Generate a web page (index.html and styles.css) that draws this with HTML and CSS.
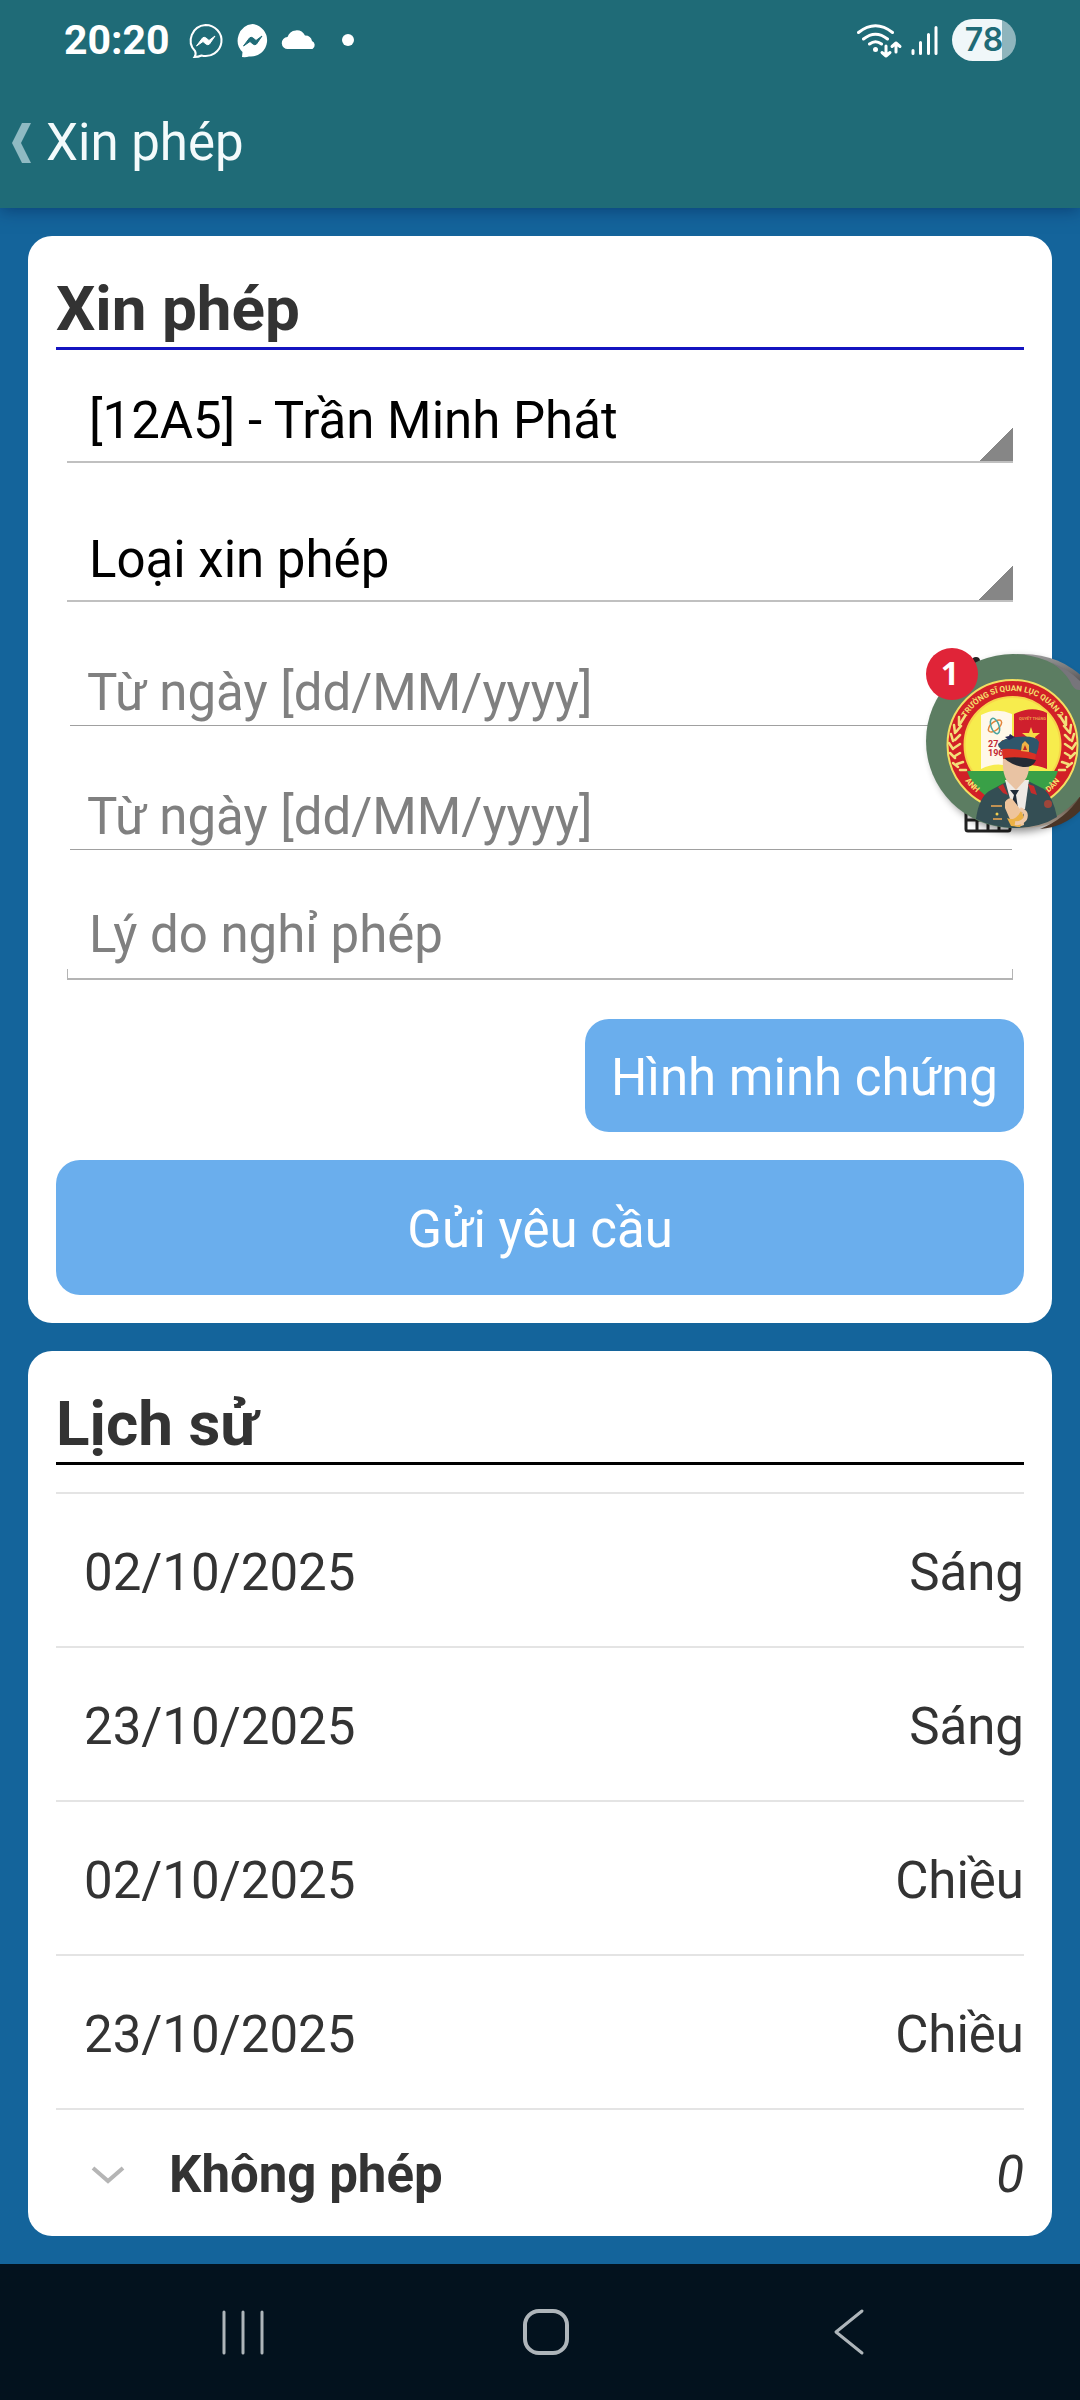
FILE: index.html
```html
<!DOCTYPE html>
<html lang="vi">
<head>
<meta charset="utf-8">
<meta name="viewport" content="width=device-width, initial-scale=1">
<title>Xin phép</title>
<link rel="stylesheet" href="styles.css">
</head>
<body>
<div class="screen">
  <header class="top">
    <div class="status">
      <span class="clock">20:20</span>
      <svg class="notes" width="168" height="40" viewBox="186 20 168 40" aria-hidden="true">
        <path d="M205.500 25a16 15.500 0 1 1-4 30.500q-3 1.500-7 1.500q2-3 .5-6A16 15.500 0 0 1 205.500 25z" fill="none" stroke="#fff" stroke-width="2"/>
        <path d="M196.500 46l6-8q1.500-1.500 3.500 0l3 2.500 6-4.500-5.500 8q-1.500 1.500-3.500 0l-3-2.500z" fill="#fff" stroke="#fff" stroke-width="1" stroke-linejoin="round"/>
        <path d="M252.500 24a16 16 0 1 1-3.500 32.500q-3 1-7 .5l.5-5A16.500 16.500 0 0 1 252.500 24z" fill="#fff"/>
        <path d="M243.500 46l6-8q1.500-1.500 3.500 0l3 2.500 6-4.500-5.500 8q-1.500 1.500-3.500 0l-3-2.500z" fill="#1f6b77" stroke="#1f6b77" stroke-linejoin="round"/>
        <path d="M288 49a6 6 0 0 1-.5-12A9.500 9.500 0 0 1 305 35.500a7 7 0 0 1 7 5.500a4.500 4.500 0 0 1 .5 8z" fill="#fff"/>
        <circle cx="348" cy="40" r="6" fill="#fff"/>
      </svg>
      <svg class="signal" width="86" height="40" viewBox="855 20 86 40" aria-hidden="true">
        <g fill="none" stroke="#fff" stroke-width="3" stroke-linecap="round" stroke-linejoin="round">
          <path d="M858.500 32.500Q875.500 19 892.500 32.500M863.500 39Q875.500 29.500 887.500 39M869.500 44Q875.500 39.500 881.500 44"/>
          <path d="M886 46v10M882 52.500l4 3.500 4-3.500M896 52V43M892 46.500l4-3.500 4 3.500"/>
          <path d="M913 50.500v3M920.500 42.500v11M928.500 34.500v19M936 27.500v26"/>
        </g>
        <circle cx="875.500" cy="49.500" r="2.500" fill="#fff"/>
      </svg>
      <span class="battery">78</span>
    </div>
    <div class="appbar">
      <a class="back" href="#" aria-label="Xin phép">
        <svg width="20" height="40" viewBox="0 0 20 40"><path d="M10 0h9L9 20l10 20h-9L0 20z" fill="#8fbac3"/></svg>
      </a>
      <span>Xin phép</span>
    </div>
  </header>

  <main class="content">
    <section class="card">
      <h1 class="title title-form">Xin phép</h1>
      <form class="form">
        <select class="picker" aria-label="[12A5] - Trần Minh Phát"><option>[12A5] - Trần Minh Phát</option></select>
        <select class="picker picker-type" aria-label="Loại xin phép"><option>Loại xin phép</option></select>
        <div class="date">
          <input type="text" aria-label="Từ ngày" placeholder="Từ ngày [dd/MM/yyyy]">
          <svg class="cal" width="48" height="52" viewBox="0 0 48 52" aria-hidden="true"><g fill="none" stroke="#222" stroke-width="3"><rect x="2" y="6" width="44" height="44" rx="2"/><path d="M2 17h44M2 28h44M2 39h44M13 17v33M24 17v33M35 17v33"/><path d="M12 4v5M36 4v5" stroke-width="8" stroke-linecap="round"/></g></svg>
        </div>
        <div class="date">
          <input type="text" aria-label="Từ ngày" placeholder="Từ ngày [dd/MM/yyyy]">
          <svg class="cal" width="48" height="52" viewBox="0 0 48 52" aria-hidden="true"><g fill="none" stroke="#222" stroke-width="3"><rect x="2" y="6" width="44" height="44" rx="2"/><path d="M2 17h44M2 28h44M2 39h44M13 17v33M24 17v33M35 17v33"/><path d="M12 4v5M36 4v5" stroke-width="8" stroke-linecap="round"/></g></svg>
        </div>
        <textarea class="reason" rows="1" aria-label="Lý do nghỉ phép" placeholder="Lý do nghỉ phép"></textarea>
        <button class="btn btn-proof" type="button">Hình minh chứng</button>
        <button class="btn btn-send" type="button">Gửi yêu cầu</button>
      </form>
    </section>

    <section class="card">
      <h2 class="title">Lịch sử</h2>
      <table class="history">
        <tbody>
          <tr><td>02/10/2025</td><td>Sáng</td></tr>
          <tr><td>23/10/2025</td><td>Sáng</td></tr>
          <tr><td>02/10/2025</td><td>Chiều</td></tr>
          <tr><td>23/10/2025</td><td>Chiều</td></tr>
        </tbody>
      </table>
      <button class="group" type="button">
        <svg width="34" height="18" viewBox="0 0 34 18" aria-hidden="true"><path d="M2 2l15 13L32 2" fill="none" stroke="#b5b5b5" stroke-width="4"/></svg>
        <strong>Không phép</strong>
        <em>0</em>
      </button>
    </section>
  </main>

  <nav class="nav">
    <a href="#"><svg width="48" height="48" viewBox="0 0 48 48"><path d="M5 4v41M24 4v41M43 4v41" stroke="#aeb5ba" stroke-width="3" stroke-linecap="round"/></svg></a>
    <a href="#"><svg width="48" height="48" viewBox="0 0 48 48"><rect x="3" y="3" width="42" height="42" rx="14" fill="none" stroke="#aeb5ba" stroke-width="4"/></svg></a>
    <a href="#"><svg width="48" height="48" viewBox="0 0 48 48"><path d="M37 3L11 24l26 21" fill="none" stroke="#aeb5ba" stroke-width="3" stroke-linecap="round" stroke-linejoin="round"/></svg></a>
  </nav>

  <svg class="chat" width="160" height="200" viewBox="920 640 160 200" aria-hidden="true">
    <defs>
      <path id="arc-top" d="M958.500 745a54 54 0 0 1 108 0"/>
      <path id="arc-bottom" d="M953 745a59.500 59.500 0 0 0 119 0"/>
      <linearGradient id="photo" x1="0" y1="0" x2="0" y2="1"><stop offset="0" stop-color="#9b9b9b"/><stop offset=".15" stop-color="#5d5b5d"/><stop offset=".8" stop-color="#4d3a2d"/><stop offset="1" stop-color="#a99c8f"/></linearGradient>
      <filter id="soft" x="-20%" y="-20%" width="140%" height="140%"><feGaussianBlur stdDeviation="4"/></filter>
    </defs>
    <circle cx="1018" cy="745" r="87" fill="#000" opacity=".45" filter="url(#soft)"/>
    <circle cx="1024" cy="741" r="87" fill="url(#photo)"/>
    <circle cx="1013" cy="741" r="87" fill="#5c7d62"/>
    <path d="M1052 663q16 6 28 18v9q-6 1-10-9-7-11-18-18z" fill="#77757b"/>
    <path d="M1080 797v14q-16 16-40 18q25-10 40-32z" fill="#4a3527"/>
    <circle cx="1012.500" cy="745" r="65" fill="#d22027" stroke="#f2df62" stroke-width="2"/>
    <circle cx="1012.500" cy="745" r="48" fill="#f7ec4d" stroke="#f7d54a" stroke-width="2"/>
    <path d="M967 771h91a48 48 0 0 1-91 0z" fill="#39a047"/>
    <path d="M981 715q15-8 31-1v53q-16-6-31 2z" fill="#fff8e9"/>
    <path d="M1014 714q18-9 33-1v56q-16-7-33-2z" fill="#cf1f2d"/>
    <g fill="none" stroke-width="1.500"><ellipse cx="995" cy="726" rx="4" ry="8" transform="rotate(50 995 726)" stroke="#e3863d"/><ellipse cx="995" cy="726" rx="4" ry="8" transform="rotate(-20 995 726)" stroke="#4aa5a0"/></g>
    <path d="M1031 727l2 6h7l-5 4 2 7-6-4-6 4 2-7-5-4h7z" fill="#f7dc45"/>
    <text class="book" x="988" y="747">27.8</text>
    <text class="book" x="988" y="756">1961</text>
    <text class="book-gold" x="1019" y="720">QUYẾT THẮNG</text>
    <text class="ring"><textPath href="#arc-top" startOffset="50%" text-anchor="middle">TRƯỜNG SĨ QUAN LỤC QUÂN 2</textPath></text>
    <text class="ring"><textPath href="#arc-bottom" startOffset="25%" text-anchor="middle">ANH</textPath></text>
    <text class="ring"><textPath href="#arc-bottom" startOffset="75%" text-anchor="middle">DÂN</textPath></text>
    <g fill="none" stroke="#f3df79" stroke-width="2.500" stroke-linecap="round">
      <path d="M965 716l-5 8M959 717v8M961 726l-5 6M954 725l1 8M960 735l-5 5M951 734l2 7M960 744l-6 4M949 743l4 6M960 753l-5 3M950 753l5 5M963 762l-6 2M953 763l5 4M966 770l-6 0"/>
      <path d="M1060 716l5 8M1066 717v8M1064 726l5 6M1071 725l-1 8M1065 735l5 5M1074 734l-2 7M1065 744l6 4M1076 743l-4 6M1065 753l5 3M1075 753l-5 5M1062 762l6 2M1072 763l-5 4M1059 770l6 0"/>
    </g>
    <path d="M976 819q3-23 15-29l15-8h24l14 7q9 8 13 28q-17 11-43 11-22-1-38-9z" fill="#344e54"/>
    <path d="M1005 780l8 30 12-1 4-29z" fill="#eee9e4"/>
    <path d="M1010 790l4 5-4 14 4 6 4-7-2-13 3-5z" fill="#202c39"/>
    <path d="M998 787l5-3 5 11-5-2zM1028 784l6 2 3 9-6-2z" fill="#c42c2c"/>
    <path d="M1003 759h26q1 15-4 21l-9 10-9-9q-5-8-4-22z" fill="#e9c3a3"/>
    <path d="M998 744q5-6 18-7 20-2 23 5 0 6-3 13l-34-5q-4-3-4-6z" fill="#2f566b"/>
    <path d="M1002 749q18-1 34 5l-1 7q-16-4-32-2z" fill="#d93024"/>
    <path d="M1004 758q16-2 32 2-3 8-13 7-12-2-19-9z" fill="#262b35"/>
    <path d="M1021 751l1-7 3-3 4 4v7z" fill="#efb245"/>
    <path d="M1023 750l2-5 2 5z" fill="#b52a22"/>
    <path d="M1005 737l4-1 1-2 3 2 2 1-6 3z" fill="#222b56"/>
    <path d="M1005 802q5-7 9-1l9 12 1 12q-8 4-12-1l-7-16z" fill="#eec49c"/>
    <path d="M1007 818q8 4 14-7l3 6-4 10-9-1z" fill="#ecb145"/>
    <path d="M1020 809q8 3 5 10-4 5-10 4" fill="none" stroke="#efc9a9" stroke-width="4"/>
    <path d="M991 806h11M993 819h9" stroke="#c19152" stroke-width="2"/>
    <circle cx="997" cy="814" r="1.500" fill="#f0cd50"/>
    <circle cx="1048" cy="804" r="4" fill="#9e463a"/>
    <circle cx="952" cy="674" r="26" fill="#e02438"/>
    <text class="count" x="950" y="685">1</text>
  </svg>
</div>
</body>
</html>
```
FILE: styles.css
```css
* { box-sizing: border-box; }

body {
  margin: 0;
  background: #14649b;
  color: #333;
  font: 51px/60px Roboto, "Noto Sans", sans-serif;
}

.screen {
  position: relative;
  display: flex;
  flex-direction: column;
  min-height: 100vh;
  overflow: hidden;
}

input, select, textarea, button {
  font: inherit;
  margin: 0;
  padding: 0;
  border: 0;
  border-radius: 0;
  background: none;
}

svg { display: block; flex: none; }

/* Header */
.top {
  position: relative;
  background: #1f6b77;
  color: #f3fafb;
  box-shadow: 0 2px 16px rgba(0, 30, 80, .5);
}

.status {
  display: flex;
  align-items: center;
  height: 80px;
  padding: 0 64px;
}

.clock {
  color: #fff;
  font-size: 41px;
  font-weight: 700;
}

.notes { margin-left: 16px; }
.signal { margin-left: auto; }

.battery {
  width: 64px;
  height: 42px;
  margin-left: 11px;
  border-radius: 21px;
  background: linear-gradient(90deg, #f0f7f9 50px, #8fb5bd 50px);
  color: #1f6b77;
  font: 600 32px/42px Inter, sans-serif;
  text-align: center;
}

.appbar {
  display: flex;
  align-items: center;
  gap: 14px;
  height: 128px;
  padding: 0 12px 2px;
}

/* Cards */
.content {
  display: flex;
  flex: 1;
  flex-direction: column;
  gap: 28px;
  padding: 28px;
}

.card {
  padding: 35px 28px 28px;
  border-radius: 24px;
  background: #fff;
}

.card:last-child { padding-bottom: 0; }

.title {
  margin: 0;
  border-bottom: 3px solid #000;
  font-size: 62px;
  font-weight: 700;
  line-height: 76px;
}

.title-form { border-color: #1414c0; }

/* Form */
.form {
  display: flex;
  flex-direction: column;
  padding-top: 28px;
}

.picker {
  appearance: none;
  height: 85px;
  margin: 0 11px;
  padding: 3px 0 0 22px;
  border-bottom: 2px solid #c0c0c0;
  background: linear-gradient(135deg, transparent 50%, #868686 50%) no-repeat right bottom / 34px 34px;
  color: #000;
}

.picker-type { margin-top: 54px; }

.date {
  display: flex;
  height: 65px;
  margin: 59px 12px 0 14px;
  border-bottom: 1px solid #a0a0a0;
}

.date input {
  flex: 1;
  min-width: 0;
  padding-left: 17px;
}

.cal { margin-top: -4px; }

::placeholder {
  color: #808080;
  opacity: 1;
}

.reason {
  height: 92px;
  margin: 38px 11px 39px;
  padding: 17px 22px 0;
  overflow: hidden;
  resize: none;
  background:
    linear-gradient(#b4b4b4, #b4b4b4) left bottom / 100% 2px,
    linear-gradient(#b4b4b4, #b4b4b4) left bottom / 1px 11px,
    linear-gradient(#b4b4b4, #b4b4b4) right bottom / 1px 11px;
  background-repeat: no-repeat;
}

.btn {
  padding: 4px 26px 0;
  border-radius: 24px;
  background: #6aaeed;
  color: #fff;
}

.btn-proof {
  align-self: flex-end;
  height: 113px;
}

.btn-send {
  height: 135px;
  margin-top: 28px;
}

/* History */
.history {
  width: 100%;
  margin-top: 27px;
  border-spacing: 0;
}

.history td {
  height: 154px;
  padding: 5px 0 0 28px;
  border-top: 2px solid #e4e4e4;
}

.history td:last-child { text-align: right; }

.group {
  display: flex;
  align-items: center;
  width: 100%;
  height: 128px;
  padding: 3px 0 0 35px;
  border-top: 2px solid #e4e4e4;
  color: #333;
}

.group strong { margin-left: 44px; }
.group em { margin-left: auto; }

/* System navigation */
.nav {
  display: flex;
  justify-content: space-around;
  align-items: center;
  height: 136px;
  padding: 0 80px 0 91px;
  background: #03121e;
}

/* Floating chat head */
.chat {
  position: absolute;
  top: 640px;
  right: 0;
}

.ring {
  fill: #f6e26f;
  font: 700 8px Roboto, sans-serif;
}

.book {
  fill: #c22a35;
  font: 700 9px Roboto, sans-serif;
}

.book-gold {
  fill: #eda04a;
  font: 700 4px Roboto, sans-serif;
}

.count {
  fill: #fff;
  font: 700 32px "Noto Sans", sans-serif;
  text-anchor: middle;
}
```
